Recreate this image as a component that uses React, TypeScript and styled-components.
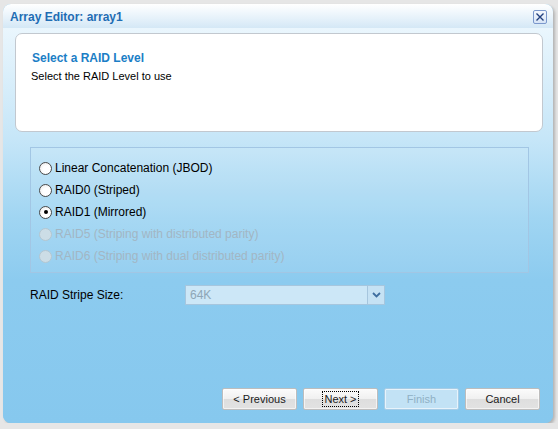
import * as React from "react";
import styled, { createGlobalStyle } from "styled-components";

const GlobalStyle = createGlobalStyle`
  html, body {
    margin: 0;
    padding: 0;
    background: #e6e6e6;
  }
  body {
    font-family: "Liberation Sans", Arial, sans-serif;
  }
`;

const Window = styled.div`
  margin: 4px 0 0 3px;
  width: 550px;
  height: 419px;
  border-radius: 8px;
  overflow: hidden;
  display: flex;
  flex-direction: column;
  box-shadow: 2px 2px 3px rgba(0, 0, 0, 0.22);
  background: #86c8ee;
`;

const TitleBar = styled.div`
  height: 24px;
  flex-shrink: 0;
  display: flex;
  align-items: center;
  justify-content: space-between;
  padding: 0 6px 0 7px;
  background: linear-gradient(to bottom, #ffffff 0%, #eef6fc 40%, #d4e8f6 100%);
`;

const Title = styled.div`
  font-weight: bold;
  font-size: 12px;
  color: #1f6db4;
  padding-top: 1px;
`;

const CloseButton = styled.div`
  width: 12px;
  height: 12px;
  border: 1px solid #7b98cc;
  border-radius: 2px;
  background: linear-gradient(to bottom, #f4f8fe, #d6e4f6);
  display: flex;
  align-items: center;
  justify-content: center;
  margin-top: 1px;
`;

const Body = styled.div`
  flex: 1;
  display: flex;
  flex-direction: column;
  padding: 5px 10px 13px 12px;
  background: linear-gradient(
    to bottom,
    #eaf6fd 0%,
    #c6e6f8 28%,
    #a0d5f2 48%,
    #8ccbef 64%,
    #86c8ee 100%
  );
`;

const HeaderBox = styled.div`
  height: 97px;
  background: #ffffff;
  border: 1px solid #c2c8cf;
  border-radius: 7px;
  padding: 0 16px;
`;

const HeaderTitle = styled.div`
  margin-top: 17px;
  font-weight: bold;
  font-size: 12px;
  color: #1b7ec6;
`;

const HeaderText = styled.div`
  margin-top: 5px;
  margin-left: -1px;
  font-size: 11px;
  color: #000000;
`;

const Group = styled.fieldset`
  margin: 15px 14px 0 15px;
  padding: 9px 8px 0 8px;
  height: 115px;
  border: 1px solid #a2c6e4;
  background: rgba(255, 255, 255, 0.08);
  display: flex;
  flex-direction: column;
`;

const RadioRow = styled.label<{ $disabled?: boolean }>`
  height: 22px;
  display: flex;
  align-items: center;
  gap: 3px;
  font-size: 12px;
  color: ${(p) => (p.$disabled ? "#a2b6c4" : "#000000")};
`;

const RadioDot = styled.span<{ $checked?: boolean; $disabled?: boolean }>`
  width: 11px;
  height: 11px;
  border-radius: 50%;
  border: 1px solid ${(p) => (p.$disabled ? "#b4c6d0" : "#4a4a4a")};
  background: ${(p) =>
    p.$disabled
      ? "#ccdde6"
      : "radial-gradient(circle at 60% 60%, #ffffff 40%, #e4e4e4 100%)"};
  display: flex;
  align-items: center;
  justify-content: center;
  flex-shrink: 0;
  &::after {
    content: "";
    display: ${(p) => (p.$checked ? "block" : "none")};
    width: 4px;
    height: 4px;
    border-radius: 50%;
    background: #000000;
  }
`;

const FieldRow = styled.div`
  margin: 12px 0 0 15px;
  display: flex;
  align-items: center;
`;

const FieldLabel = styled.div`
  width: 155px;
  font-size: 12px;
  color: #000000;
`;

const Select = styled.div`
  width: 198px;
  height: 18px;
  display: flex;
  border: 1px solid #a6c6de;
  background: #cce7f7;
`;

const SelectValue = styled.div`
  flex: 1;
  font-size: 12px;
  color: #8ea6b6;
  padding-left: 4px;
  line-height: 18px;
`;

const SelectArrow = styled.div`
  width: 16px;
  border-left: 1px solid #a6c6de;
  background: #c6e2f4;
  display: flex;
  align-items: center;
  justify-content: center;
`;

const Spacer = styled.div`
  flex: 1;
`;

const ButtonRow = styled.div`
  display: flex;
  justify-content: flex-end;
  gap: 6px;
  padding-right: 3px;
`;

const Button = styled.button<{ $disabled?: boolean }>`
  width: 75px;
  height: 22px;
  padding: 0;
  font-family: "Liberation Sans", Arial, sans-serif;
  font-size: 11px;
  border-radius: 2px;
  border: 1px solid ${(p) => (p.$disabled ? "#a6cce6" : "#bdbdbd")};
  color: ${(p) => (p.$disabled ? "#8fb0c4" : "#1a1a1a")};
  background: ${(p) =>
    p.$disabled
      ? "#c2e2f5"
      : "linear-gradient(to bottom, #fbfbfb 0%, #f0f0f0 50%, #dedede 51%, #e2e2e2 100%)"};
  box-shadow: inset 0 0 0 1px rgba(255, 255, 255, 0.6);
  display: flex;
  align-items: center;
  justify-content: center;
`;

const FocusText = styled.span`
  outline: 1px dotted #000000;
  padding: 1px 1px;
`;

const options = [
  { label: "Linear Concatenation (JBOD)" },
  { label: "RAID0 (Striped)" },
  { label: "RAID1 (Mirrored)", checked: true },
  { label: "RAID5 (Striping with distributed parity)", disabled: true },
  { label: "RAID6 (Striping with dual distributed parity)", disabled: true },
];

export default function App() {
  return (
    <>
      <GlobalStyle />
      <Window>
        <TitleBar>
          <Title>Array Editor: array1</Title>
          <CloseButton>
            <svg width="10" height="10" viewBox="0 0 10 10">
              <path d="M1.5 1.5 L8.5 8.5 M8.5 1.5 L1.5 8.5" stroke="#23407e" strokeWidth="1.4" />
            </svg>
          </CloseButton>
        </TitleBar>
        <Body>
          <HeaderBox>
            <HeaderTitle>Select a RAID Level</HeaderTitle>
            <HeaderText>Select the RAID Level to use</HeaderText>
          </HeaderBox>
          <Group>
            {options.map((o) => (
              <RadioRow key={o.label} $disabled={o.disabled}>
                <RadioDot $checked={o.checked} $disabled={o.disabled} />
                {o.label}
              </RadioRow>
            ))}
          </Group>
          <FieldRow>
            <FieldLabel>RAID Stripe Size:</FieldLabel>
            <Select>
              <SelectValue>64K</SelectValue>
              <SelectArrow>
                <svg width="9" height="6" viewBox="0 0 9 6">
                  <path d="M1 1 L4.5 4.5 L8 1" stroke="#3f6ea0" strokeWidth="1.8" fill="none" />
                </svg>
              </SelectArrow>
            </Select>
          </FieldRow>
          <Spacer />
          <ButtonRow>
            <Button>&lt; Previous</Button>
            <Button>
              <FocusText>Next &gt;</FocusText>
            </Button>
            <Button $disabled>Finish</Button>
            <Button>Cancel</Button>
          </ButtonRow>
        </Body>
      </Window>
    </>
  );
}
